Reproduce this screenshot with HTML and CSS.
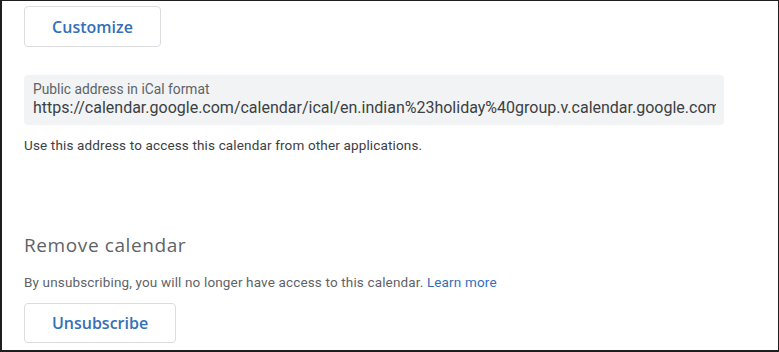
FILE: index.html
```html
<!DOCTYPE html>
<html lang="en">
<head>
<meta charset="utf-8">
<title>Calendar settings</title>
<link rel="stylesheet" href="styles.css">
</head>
<body>
<div class="frame">
  <button class="btn btn-customize">Customize</button>
  <div class="ical-box">
    <div class="ical-label">Public address in iCal format</div>
    <div class="ical-url">https://calendar.google.com/calendar/ical/en.indian%23holiday%40group.v.calendar.google.com/public/basic.ics</div>
  </div>
  <p class="hint">Use this address to access this calendar from other applications.</p>
  <h2 class="section-title">Remove calendar</h2>
  <p class="desc">By unsubscribing, you will no longer have access to this calendar. <a class="link" href="#">Learn more</a></p>
  <button class="btn btn-unsub">Unsubscribe</button>
</div>
</body>
</html>
```

FILE: styles.css
```css
html, body {
  margin: 0;
  padding: 0;
  background: #fff;
}
.frame {
  box-sizing: border-box;
  width: 779px;
  height: 352px;
  border-style: solid;
  border-color: #1e1e1e;
  border-width: 1px 1px 2px 2px;
  padding: 5px 0 0 22px;
  font-family: Roboto, "Liberation Sans", sans-serif;
  overflow: hidden;
}
.btn {
  display: block;
  box-sizing: border-box;
  background: #fff;
  border: 1px solid #dadce0;
  border-radius: 4px;
  color: #3470b8;
  font-family: "Open Sans", Roboto, sans-serif;
  font-weight: 600;
  font-size: 16px;
  padding: 0;
  margin: 0;
  cursor: pointer;
}
.btn-customize {
  width: 137px;
  height: 41px;
}
.ical-box {
  box-sizing: border-box;
  margin-top: 28px;
  width: 700px;
  height: 50px;
  background: #f1f3f4;
  border-radius: 4px;
  padding: 6px 8px 0 9px;
  overflow: hidden;
}
.ical-label {
  font-size: 13.8px;
  line-height: 16px;
  color: #5f6368;
  white-space: nowrap;
}
.ical-url {
  font-size: 16px;
  line-height: 20px;
  margin-top: 1px;
  color: #3c4043;
  white-space: nowrap;
  overflow: hidden;
}
.hint {
  margin: 12px 0 0;
  font-size: 13.5px;
  letter-spacing: 0.15px;
  line-height: 16px;
  color: #3c4043;
}
.section-title {
  margin: 80px 0 0;
  font-family: "Open Sans", Roboto, sans-serif;
  font-weight: 400;
  font-size: 19px;
  letter-spacing: 0.6px;
  line-height: 24px;
  color: #5f6368;
}
.desc {
  margin: 17px 0 0;
  font-size: 13.5px;
  letter-spacing: 0.15px;
  line-height: 16px;
  color: #5f6368;
}
.link {
  color: #3470b8;
  text-decoration: none;
}
.btn-unsub {
  margin-top: 13px;
  width: 152px;
  height: 40px;
}
```
